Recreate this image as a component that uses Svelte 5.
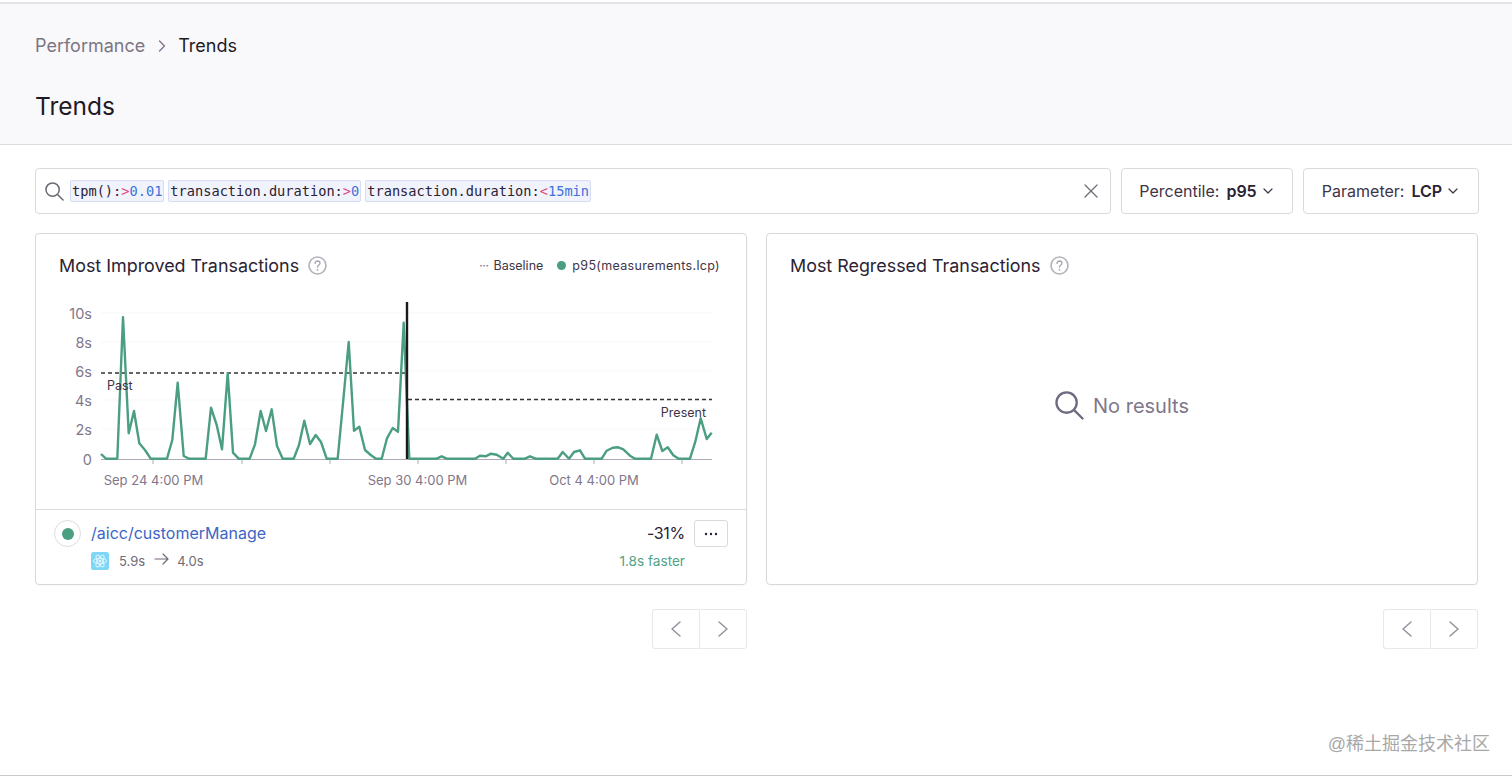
<script>
    // chart points, read off the reference in 3x crop coordinates
    const pastPts = [[183,492],[198,506],[232,506],[249,82],[266,430],[282,363],[298,460],[315,480],[332,506],[381,506],[397,450],[413,278],[431,498],[447,506],[497,506],[513,353],[530,405],[546,478],[563,250],[579,488],[596,506],[629,506],[645,463],[662,363],[678,423],[695,358],[711,468],[728,506],[761,506],[777,465],[793,392],[810,462],[827,435],[843,456],[860,506],[893,506],[910,330],[926,156],[942,422],[958,410],[975,480],[992,495],[1008,506],[1025,506],[1041,445],[1058,414],[1074,425],[1091,98]];
    const presentPts = [[58,506],[140,506],[155,499],[170,506],[255,506],[270,497],[287,499],[303,491],[320,494],[340,506],[353,488],[370,506],[405,506],[420,499],[437,506],[503,506],[518,486],[537,506],[552,486],[570,481],[585,506],[635,506],[650,482],[668,473],[685,472],[700,478],[720,497],[735,506],[783,506],[800,434],[817,483],[833,472],[850,496],[866,506],[900,506],[916,455],[932,385],[950,447],[965,428]];

    const series = [
        ...pastPts.map(([x, y]) => [40 + x / 3, 290 + y / 3]),
        ...presentPts.map(([x, y]) => [390 + x / 3, 290 + y / 3]),
    ]
        .map((p) => p.map((n) => n.toFixed(1)).join(","))
        .join(" ");

    const yLabels = [
        { text: "10s", y: 313 },
        { text: "8s", y: 342 },
        { text: "6s", y: 371 },
        { text: "4s", y: 400 },
        { text: "2s", y: 429 },
        { text: "0", y: 459 },
    ];
    const xTicks = [153, 242, 330, 418, 506, 594, 682];
    const xLabels = [
        { text: "Sep 24 4:00 PM", x: 153.5 },
        { text: "Sep 30 4:00 PM", x: 417.5 },
        { text: "Oct 4 4:00 PM", x: 594 },
    ];
</script>

{#snippet searchIcon(size, stroke)}
    <svg width={size} height={size} viewBox="0 0 20 20" fill="none" stroke="currentColor" stroke-width={stroke} stroke-linecap="round">
        <circle cx="8" cy="8" r="7" />
        <path d="M13.2 13.2L19 19" />
    </svg>
{/snippet}

{#snippet chevron(dir)}
    <svg width="14" height="20" viewBox="0 0 14 20" fill="none" stroke="currentColor" stroke-width="1.5" stroke-linecap="round" stroke-linejoin="round">
        {#if dir === "left"}
            <path d="M11 3L3 10L11 17" />
        {:else}
            <path d="M3 3L11 10L3 17" />
        {/if}
    </svg>
{/snippet}

{#snippet help()}
    <svg class="help" width="19" height="19" viewBox="0 0 19 19" fill="none">
        <circle cx="9.5" cy="9.5" r="8.5" stroke="#b5b0bb" stroke-width="1.6" />
        <path d="M7 7.4c0-1.5 1.1-2.4 2.5-2.4s2.5.9 2.5 2.2c0 1.9-2.5 1.9-2.5 4" stroke="#a8a3ae" stroke-width="1.3" fill="none" stroke-linecap="round" />
        <circle cx="9.5" cy="13.8" r=".9" fill="#a8a3ae" />
    </svg>
{/snippet}

{#snippet pager()}
    <div class="pager">
        <div class="pager-btn">{@render chevron("left")}</div>
        <div class="pager-btn">{@render chevron("right")}</div>
    </div>
{/snippet}

<div class="page">
    <header class="header">
        <div class="crumbs">
            <span class="crumb-link">Performance</span>
            <svg class="crumb-sep" width="8" height="12" viewBox="0 0 8 12" fill="none" stroke="#80708f" stroke-width="1.3" stroke-linecap="round" stroke-linejoin="round"><path d="M1.5 1L6.5 6L1.5 11" /></svg>
            <span class="crumb-current">Trends</span>
        </div>
        <h1>Trends</h1>
    </header>

    <main class="body">
        <div class="filters">
            <div class="search">
                <span class="search-icon">{@render searchIcon(19, 1.6)}</span>
                <span class="tokens">
                    <span class="token">tpm():<i class="op">&gt;</i><i class="val">0.01</i></span>
                    <span class="token">transaction.duration:<i class="op">&gt;</i><i class="val">0</i></span>
                    <span class="token">transaction.duration:<i class="op">&lt;</i><i class="val">15min</i></span>
                </span>
                <svg class="clear" width="14" height="14" viewBox="0 0 14 14" stroke="#6f6b76" stroke-width="1.3" stroke-linecap="round"><path d="M1 1L13 13M13 1L1 13" /></svg>
            </div>
            <button class="dropdown percentile">
                <span>Percentile:</span><b>p95</b>
                <svg width="10" height="6" viewBox="0 0 10 6" fill="none" stroke="#3e3446" stroke-width="1.2" stroke-linecap="round" stroke-linejoin="round"><path d="M1 1L5 5L9 1" /></svg>
            </button>
            <button class="dropdown parameter">
                <span>Parameter:</span><b>LCP</b>
                <svg width="10" height="6" viewBox="0 0 10 6" fill="none" stroke="#3e3446" stroke-width="1.2" stroke-linecap="round" stroke-linejoin="round"><path d="M1 1L5 5L9 1" /></svg>
            </button>
        </div>

        <div class="columns">
            <section class="column">
                <div class="card">
                    <div class="card-head">
                        <h2>Most Improved Transactions</h2>
                        {@render help()}
                        <div class="legend">
                            <span class="dots">···</span><span>Baseline</span>
                            <span class="dot"></span><span class="series-name">p95(measurements.lcp)</span>
                        </div>
                    </div>
                    <svg class="chart" width="710" height="214" viewBox="36 296 710 214">
                        {#each yLabels.slice(0, 5) as row}
                            <line x1="101" x2="712" y1={row.y} y2={row.y} stroke="#f8f7f9" />
                        {/each}
                        <line x1="101" x2="712" y1="459.5" y2="459.5" stroke="#aea8b6" stroke-width="1.2" />
                        {#each xTicks as x}
                            <line x1={x} x2={x} y1="459" y2="464" stroke="#aea8b6" />
                        {/each}
                        {#each yLabels as row}
                            <text class="axis axis-y" x="92" y={row.y + 6} text-anchor="end">{row.text}</text>
                        {/each}
                        {#each xLabels as label}
                            <text class="axis" x={label.x} y="485" text-anchor="middle">{label.text}</text>
                        {/each}
                        <line x1="101" x2="405" y1="373" y2="373" stroke="#333" stroke-width="1.3" stroke-dasharray="4 3" />
                        <line x1="408" x2="712" y1="399.5" y2="399.5" stroke="#333" stroke-width="1.3" stroke-dasharray="4 3" />
                        <polyline points={series} fill="none" stroke="#4b9e80" stroke-width="2.4" stroke-linejoin="round" />
                        <line x1="407" x2="407" y1="302" y2="459" stroke="#1c1a20" stroke-width="2.4" />
                        <text class="mark" x="107" y="390">Past</text>
                        <text class="mark" x="706" y="417" text-anchor="end">Present</text>
                    </svg>
                    <div class="row">
                        <span class="radio"><span class="radio-dot"></span></span>
                        <div class="row-main">
                            <a class="txn" href="#top">/aicc/customerManage</a>
                            <div class="row-sub">
                                <svg class="platform" width="18" height="18" viewBox="0 0 18 18">
                                    <rect width="18" height="18" rx="2.5" fill="#7fd6f6" />
                                    <g fill="none" stroke="#e4f7fe" stroke-width=".9">
                                        <ellipse cx="9" cy="9" rx="6.6" ry="2.6" />
                                        <ellipse cx="9" cy="9" rx="6.6" ry="2.6" transform="rotate(60 9 9)" />
                                        <ellipse cx="9" cy="9" rx="6.6" ry="2.6" transform="rotate(120 9 9)" />
                                    </g>
                                    <circle cx="9" cy="9" r="1.3" fill="#e4f7fe" />
                                </svg>
                                <span>5.9s</span>
                                <svg width="15" height="12" viewBox="0 0 15 12" fill="none" stroke="#6f6b76" stroke-width="1.2" stroke-linecap="round" stroke-linejoin="round"><path d="M1 6H14M9 1L14 6L9 11" /></svg>
                                <span>4.0s</span>
                            </div>
                        </div>
                        <div class="row-stats">
                            <span class="pct">-31%</span>
                            <span class="faster">1.8s faster</span>
                        </div>
                        <button class="more" aria-label="More">
                            <svg width="14" height="4" viewBox="0 0 14 4" fill="#2b2233"><circle cx="2" cy="2" r="1.2" /><circle cx="7" cy="2" r="1.2" /><circle cx="12" cy="2" r="1.2" /></svg>
                        </button>
                    </div>
                </div>
                {@render pager()}
            </section>

            <section class="column">
                <div class="card">
                    <div class="card-head">
                        <h2>Most Regressed Transactions</h2>
                        {@render help()}
                    </div>
                    <div class="empty">
                        <span class="empty-icon">{@render searchIcon(29, 1.6)}</span>
                        <span>No results</span>
                    </div>
                </div>
                {@render pager()}
            </section>
        </div>
    </main>

    <span class="watermark">@稀土掘金技术社区</span>
</div>

<style>
    :global(body) {
        margin: 0;
        background: #fff;
    }
    .page {
        position: relative;
        height: 776px;
        box-sizing: border-box;
        overflow: hidden;
        border-bottom: 1px solid #c9c9c9;
        font-family: Inter, "Noto Sans", sans-serif;
        color: #2b2233;
    }
    .header {
        height: 140px;
        margin-top: 2px;
        border-top: 2px solid #e4e3e6;
        border-bottom: 1px solid #dcdadf;
        background: #f9f8fb;
        padding: 0 35px;
    }
    .crumbs {
        display: flex;
        align-items: center;
        padding-top: 30px;
        height: 23px;
        font-size: 18px;
    }
    .crumb-link {
        color: #7b7683;
    }
    .crumb-sep {
        margin: 0 12px 0 13px;
    }
    .crumb-current {
        color: #1f1a25;
    }
    h1 {
        margin: 34px 0 0;
        font-size: 24.5px;
        font-weight: 400;
        line-height: 30px;
        color: #1f1a25;
    }
    .body {
        padding: 23px 33px 0 35px;
    }
    .filters {
        display: flex;
        gap: 10px;
    }
    .search {
        flex: 1;
        height: 46px;
        box-sizing: border-box;
        display: flex;
        align-items: center;
        border: 1px solid #dbd9de;
        border-radius: 4px;
        padding: 0 12px 0 9px;
    }
    .search-icon {
        display: flex;
        color: #6f6b76;
        margin-right: 6px;
    }
    .tokens {
        flex: 1;
        display: flex;
        gap: 4px;
        font-family: "DejaVu Sans Mono", "Liberation Mono", monospace;
        font-size: 13.65px;
        color: #2b2233;
    }
    .token {
        background: #f0f2fc;
        border: 1px solid #d6dcf3;
        border-radius: 2px;
        padding: 0 1px;
        line-height: 20px;
    }
    .token i {
        font-style: normal;
    }
    .op {
        color: #e0457b;
    }
    .val {
        color: #3f72d8;
    }
    .dropdown {
        height: 46px;
        box-sizing: border-box;
        display: flex;
        align-items: center;
        justify-content: center;
        background: #fff;
        border: 1px solid #dbd9de;
        border-radius: 4px;
        font-family: inherit;
        font-size: 16px;
        color: #3e3446;
        padding: 0 2px 0 0;
    }
    .dropdown b {
        margin: 0 6px 0 7px;
        font-weight: 600;
        color: #2b2233;
    }
    .percentile {
        width: 172px;
    }
    .parameter {
        width: 176px;
    }
    .columns {
        display: grid;
        grid-template-columns: 712px 712px;
        gap: 19px;
        margin-top: 19px;
    }
    .card {
        height: 352px;
        box-sizing: border-box;
        border: 1px solid #d9d7dc;
        border-radius: 4px;
        box-shadow: 0 1px 2px rgba(0, 0, 0, 0.03);
        display: flex;
        flex-direction: column;
    }
    .card-head {
        display: flex;
        align-items: center;
        height: 62px;
        flex: none;
        padding: 0 26px 0 23px;
    }
    h2 {
        margin: 0;
        font-size: 17.9px;
        font-weight: 400;
        color: #2b2233;
    }
    .help {
        margin-left: 9px;
    }
    .legend {
        margin-left: auto;
        display: flex;
        align-items: center;
        font-size: 12.5px;
        color: #3e3446;
    }
    .dots {
        color: #80708f;
        margin-right: 5px;
        letter-spacing: -0.5px;
    }
    .dot {
        width: 9px;
        height: 9px;
        border-radius: 50%;
        background: #4b9e80;
        margin: 0 6px 0 14px;
    }
    .series-name {
        letter-spacing: 0.33px;
    }
    .chart {
        display: block;
        flex: none;
    }
    .axis {
        font-size: 13px;
        fill: #80778a;
    }
    .axis-y {
        font-size: 14.5px;
    }
    .mark {
        font-size: 12.5px;
        fill: #3e3446;
    }
    .row {
        flex: 1;
        border-top: 1px solid #dcdadf;
        display: flex;
        align-items: flex-start;
        padding: 10px 18px 0 18px;
        margin-top: -1px;
    }
    .radio {
        width: 27px;
        height: 27px;
        box-sizing: border-box;
        border: 1px solid #dcdadf;
        border-radius: 50%;
        display: flex;
        align-items: center;
        justify-content: center;
        margin-right: 10px;
    }
    .radio-dot {
        width: 12px;
        height: 12px;
        border-radius: 50%;
        background: #4b9e80;
    }
    .row-main {
        flex: 1;
    }
    .txn {
        display: block;
        font-size: 16px;
        line-height: 26px;
        color: #3d66c7;
        text-decoration: none;
    }
    .row-sub {
        display: flex;
        align-items: center;
        margin-top: 6px;
        font-size: 13px;
        color: #6f6b76;
    }
    .platform {
        margin-right: 10px;
    }
    .row-sub svg:not(.platform) {
        margin: -4px 8px 0 9px;
    }
    .row-stats {
        display: flex;
        flex-direction: column;
        align-items: flex-end;
    }
    .pct {
        font-size: 16px;
        line-height: 26px;
        letter-spacing: -0.3px;
        color: #2b2233;
    }
    .faster {
        margin-top: 7px;
        font-size: 13.6px;
        color: #4fa386;
    }
    .more {
        width: 34px;
        height: 27px;
        padding: 0;
        margin-left: 9px;
        background: #fff;
        border: 1px solid #dbd9de;
        border-radius: 3px;
        display: flex;
        align-items: center;
        justify-content: center;
    }
    .empty {
        flex: 1;
        display: flex;
        align-items: center;
        justify-content: center;
        gap: 9px;
        padding-bottom: 69px;
        font-size: 20px;
        color: #80778a;
    }
    .empty-icon {
        display: flex;
        color: #6e6a80;
    }
    .pager {
        display: flex;
        justify-content: flex-end;
        margin-top: 24px;
    }
    .pager-btn {
        width: 47px;
        height: 40px;
        box-sizing: border-box;
        display: flex;
        align-items: center;
        justify-content: center;
        border: 1px solid #e8e7ea;
        color: #95919c;
    }
    .pager-btn:first-child {
        border-radius: 3px 0 0 3px;
        border-right: 0;
    }
    .pager-btn:last-child {
        width: 48px;
        border-radius: 0 3px 3px 0;
    }
    .watermark {
        position: absolute;
        right: 22px;
        bottom: 20px;
        font-family: "Liberation Sans", "Noto Sans CJK SC", sans-serif;
        font-size: 18px;
        color: #a8a8a8;
    }
</style>
